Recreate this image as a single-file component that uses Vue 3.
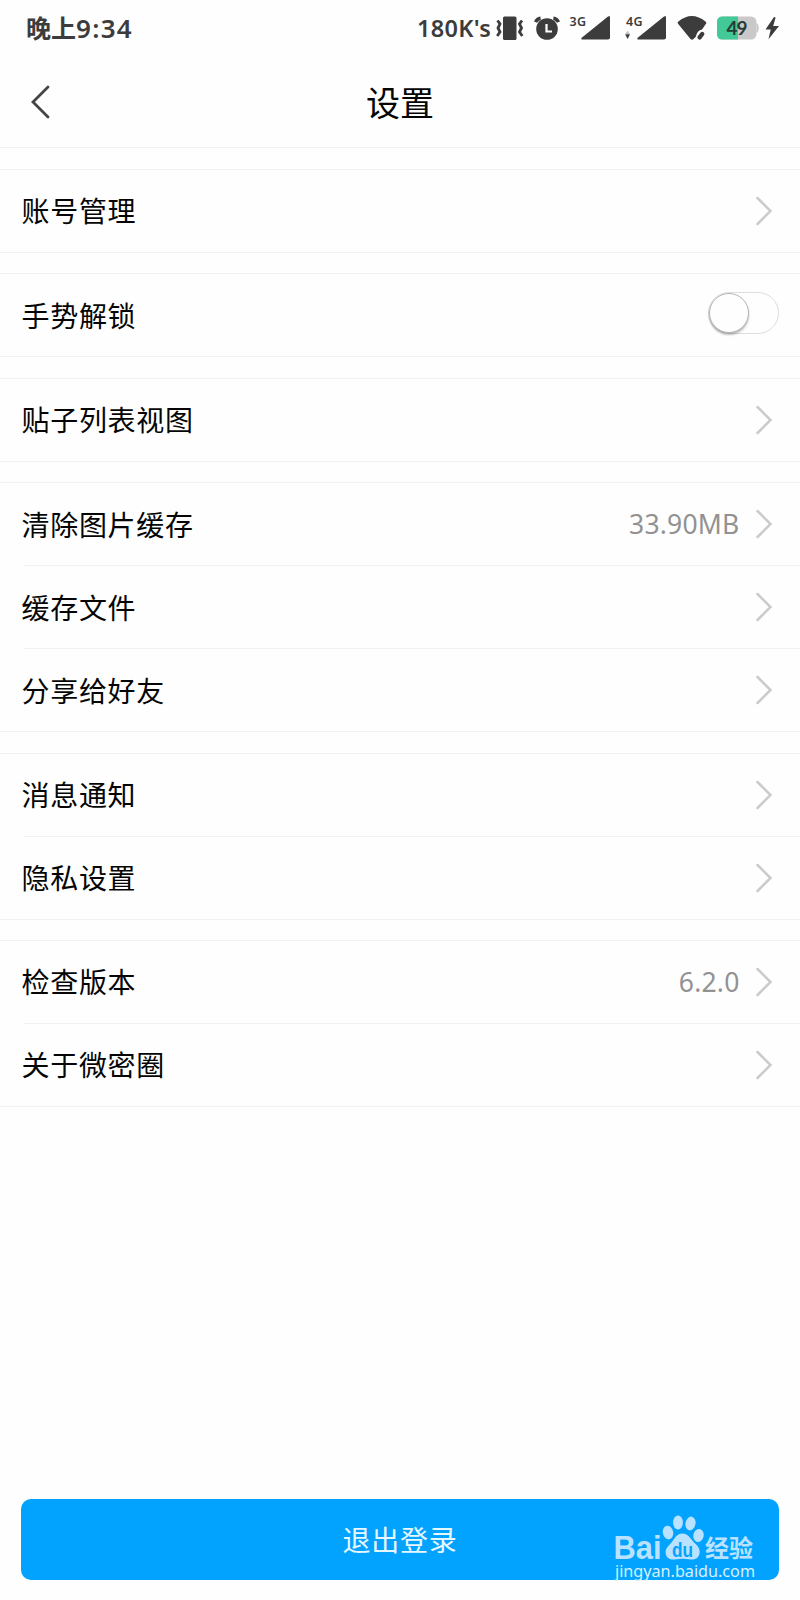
<template>
  <div class="settings-page">
    <div class="status-bar">
      <div class="clock">
        <span class="period">晚上</span><span class="time">9:34</span>
      </div>
      <div class="status-icons">
        <span class="speed">180K's</span>
        <svg class="vibrate" width="28" height="24" viewBox="0 0 28 24">
          <rect x="7" y="0.5" width="13.5" height="23.5" rx="1.5" fill="#3c3c3c" />
          <path d="M1.5 4.5l2.5 3.500-2 4L4 16l-2.800 4M26 4.500l-2.500 3.500 2 4L23.500 16l2.800 4" fill="none" stroke="#3c3c3c" stroke-width="2.800" />
        </svg>
        <svg class="alarm" width="26" height="24" viewBox="0 0 26 24">
          <circle cx="13" cy="13" r="10.8" fill="#3c3c3c" />
          <path d="M1.600 6.200Q3 2.600 6.600 2.200M24.400 6.200Q23 2.600 19.400 2.200" fill="none" stroke="#3c3c3c" stroke-width="3.400" />
          <path d="M12.500 8v7.500h5.500" fill="none" stroke="#fff" stroke-width="2.200" />
        </svg>
        <svg class="signal" width="42" height="26" viewBox="0 0 42 26">
          <text x="0.5" y="11" textLength="16.500" class="net">3G</text>
          <path d="M39 1.500q2 -1.500 2 1V22.500q0 2 -2 2H14q-3 0 -1 -2z" fill="#3c3c3c" />
        </svg>
        <svg class="signal-second" width="42" height="26" viewBox="0 0 42 26">
          <text x="1" y="11" textLength="16.500" class="net">4G</text>
          <path d="M2.600 15.600l2.200 3.400h-4.400z" fill="#c4c4c4" />
          <path d="M.2 19.300h4.800L2.600 24z" fill="#3c3c3c" />
          <path d="M39 1.500q2 -1.500 2 1V22.500q0 2 -2 2H14q-3 0 -1 -2z" fill="#3c3c3c" />
        </svg>
        <svg class="wifi" width="31" height="26" viewBox="0 0 31 26">
          <path d="M1.200 9Q0 7.600 1.400 6.500 14.700-4.600 28.500 6.500 30 7.800 28.800 9L25 14.500Q20 15.500 19 21.500L16.500 24Q15 25.500 13.500 24z" fill="#3c3c3c" />
          <path d="M22.600 22.300l2.600-3.300" stroke="#3c3c3c" stroke-width="4.400" stroke-linecap="round" />
        </svg>
        <svg class="battery" width="42" height="24" viewBox="0 0 42 24">
          <rect x="0" y="0.5" width="39.5" height="23" rx="5.5" fill="#cbc8ca" />
          <path d="M5.500.5H21v23H5.500Q0 23.500 0 18V6Q0 .5 5.500.5z" fill="#43c997" />
          <path d="M39.500 7q2.300 1 2.300 5t-2.300 5z" fill="#cbc8ca" />
          <text x="9.5" y="18.5" textLength="21" class="level">49</text>
        </svg>
        <svg class="bolt" width="15" height="24" viewBox="0 0 15 24">
          <path d="M9 1L.5 13.500h5.200L3.500 23.300 14 10H8.200L10.600 1.500z" fill="#3c3c3c" />
        </svg>
      </div>
    </div>

    <header class="nav-bar">
      <svg class="back" width="20" height="34" viewBox="0 0 20 34">
        <path d="M17 2L2 17l15 15" fill="none" stroke="#444" stroke-width="2.8" stroke-linecap="round" />
      </svg>
      <h1>设置</h1>
    </header>

    <main>
      <section v-for="(group, i) in groups" :key="i" class="group">
        <div v-for="item in group" :key="item.label" class="row">
          <span class="label">{{ item.label }}</span>
          <button v-if="item.toggle" class="switch" :class="{ on: gestureLock }" @click="gestureLock = !gestureLock">
            <span class="knob"></span>
          </button>
          <template v-else>
            <span class="value">{{ item.value }}</span>
            <svg class="arrow" width="18" height="30" viewBox="0 0 18 30">
              <path d="M1.500 2l13 13-13 13" fill="none" stroke="#cbcbcb" stroke-width="2.500" stroke-linecap="round" />
            </svg>
          </template>
        </div>
      </section>
    </main>

    <footer>
      <button class="logout">退出登录</button>
    </footer>

    <svg class="watermark" width="150" height="75" viewBox="0 0 150 75">
      <g fill="#b8e2ff">
        <text x="3.5" y="48" textLength="48" lengthAdjust="spacingAndGlyphs" class="brand">Bai</text>
        <ellipse cx="58" cy="21.5" rx="5.2" ry="6.8" transform="rotate(-12 58 21.5)" />
        <ellipse cx="68" cy="11.5" rx="4.9" ry="7" />
        <ellipse cx="80.5" cy="12.5" rx="5" ry="7" transform="rotate(12 80.5 12.5)" />
        <ellipse cx="88.5" cy="24.5" rx="5.2" ry="6.6" transform="rotate(12 88.5 24.5)" />
        <path d="M72.500 22.500C78 22.500 80 27 84 31.500C88 35 90.500 38 89.500 42.500C88.500 48 84 49 79 48.300Q72.500 47 66.500 48.300C60.500 49.300 56.500 47.500 55.700 42.500C55 37.500 58 35.500 61.500 31.500C65 27 67 22.500 72.500 22.500z" />
        <text x="95" y="46" textLength="48" lengthAdjust="spacingAndGlyphs" class="channel">经验</text>
      </g>
      <text x="62" y="46" textLength="21" lengthAdjust="spacingAndGlyphs" class="du">du</text>
      <text x="5" y="66" textLength="140" lengthAdjust="spacingAndGlyphs" class="site">jingyan.baidu.com</text>
    </svg>
  </div>
</template>

<script setup>
import { ref } from 'vue'

const gestureLock = ref(false)

const groups = [
  [{ label: '账号管理' }],
  [{ label: '手势解锁', toggle: true }],
  [{ label: '贴子列表视图' }],
  [
    { label: '清除图片缓存', value: '33.90MB' },
    { label: '缓存文件' },
    { label: '分享给好友' }
  ],
  [{ label: '消息通知' }, { label: '隐私设置' }],
  [{ label: '检查版本', value: '6.2.0' }, { label: '关于微密圈' }]
]
</script>

<style>
body {
  margin: 0;
  background-color: #fefefe;
}
</style>

<style scoped>
.settings-page {
  position: relative;
  display: flex;
  flex-direction: column;
  width: 800px;
  height: 1600px;
  overflow: hidden;
  background-color: #fefefe;
  color: #050505;
  font-family: "Noto Sans CJK SC", sans-serif;
}

button {
  padding: 0;
  border: none;
  font-family: inherit;
}

.status-bar {
  display: flex;
  align-items: center;
  justify-content: space-between;
  box-sizing: border-box;
  height: 54px;
  padding: 1px 20px 0 26px;
  color: #3c3c3c;
}

.clock {
  display: flex;
  align-items: baseline;
  line-height: 36px;
}

.period {
  font-size: 25px;
  font-weight: 700;
}

.time {
  font-family: "Noto Sans", sans-serif;
  font-size: 26px;
  font-weight: 600;
  letter-spacing: 1.3px;
}

.status-icons {
  display: flex;
  align-items: center;
}

.speed {
  width: 79px;
  font-family: "Noto Sans", sans-serif;
  font-size: 23.5px;
  font-weight: 600;
  letter-spacing: 0.3px;
  line-height: 30px;
  white-space: nowrap;
}

.alarm {
  margin-left: 10px;
}

.signal {
  margin-left: 9px;
}

.signal-second {
  margin-left: 14px;
}

.wifi {
  margin-left: 10px;
}

.battery {
  margin-left: 9px;
}

.bolt {
  margin-left: 6px;
}

.net {
  font: 600 12.5px "Noto Sans", sans-serif;
  fill: #3c3c3c;
}

.level {
  font: 700 19px Lato, sans-serif;
  fill: #263c34;
}

.nav-bar {
  display: flex;
  align-items: center;
  box-sizing: border-box;
  height: 94px;
  padding: 3px 30px 0 31px;
  border-bottom: 1px solid #f2f2f2;
}

h1 {
  flex: 1;
  margin: 0 21px 0 0;
  font-size: 34px;
  font-weight: 400;
  line-height: 50px;
  text-align: center;
}

main {
  flex: 1;
  padding-top: 0.6px;
}

.group {
  margin-top: 20.4px;
  border-top: 1px solid #f2f2f2;
}

.row {
  display: flex;
  align-items: center;
  box-sizing: border-box;
  height: 83px;
  margin-left: 24px;
  padding-right: 26px;
  border-bottom: 1px solid #f2f2f2;
}

.row:last-child {
  margin-left: 0;
  padding-left: 24px;
}

.label {
  flex: 1;
  margin-left: -2.5px;
  padding-bottom: 1px;
  font-size: 28px;
  letter-spacing: 0.7px;
}

.value {
  margin-right: 16.5px;
  color: #929292;
  font-family: "Noto Sans", sans-serif;
  font-size: 26.5px;
  letter-spacing: 0.2px;
}

.switch {
  box-sizing: border-box;
  width: 71px;
  height: 42px;
  margin: -4px -5px 0 0;
  border: 1px solid #dedede;
  border-radius: 21px;
  background-color: #fefefe;
}

.knob {
  display: block;
  box-sizing: border-box;
  width: 40px;
  height: 40px;
  border: 1px solid #b5b5b5;
  border-radius: 50%;
  background-color: #fefefe;
  box-shadow: 0 2px 2px rgba(0, 0, 0, 0.25);
}

.switch.on {
  background-color: #02a2ff;
}

.switch.on .knob {
  margin-left: 29px;
}

footer {
  display: flex;
  padding: 0 21px 20px;
}

.logout {
  flex: 1;
  height: 81px;
  padding-bottom: 2px;
  border-radius: 10px;
  background-color: #02a2ff;
  color: #e6f8ff;
  font-size: 28px;
  letter-spacing: 0.7px;
}

.watermark {
  position: absolute;
  left: 610px;
  top: 1511px;
}

.brand {
  font: 700 33px "Liberation Sans", sans-serif;
}

.channel {
  font: 700 24px "Noto Sans CJK SC", sans-serif;
}

.du {
  font: 700 20px "Liberation Sans", sans-serif;
  fill: #02a2ff;
}

.site {
  font: 400 16px "Noto Sans", sans-serif;
  fill: #d9f0ff;
}
</style>
